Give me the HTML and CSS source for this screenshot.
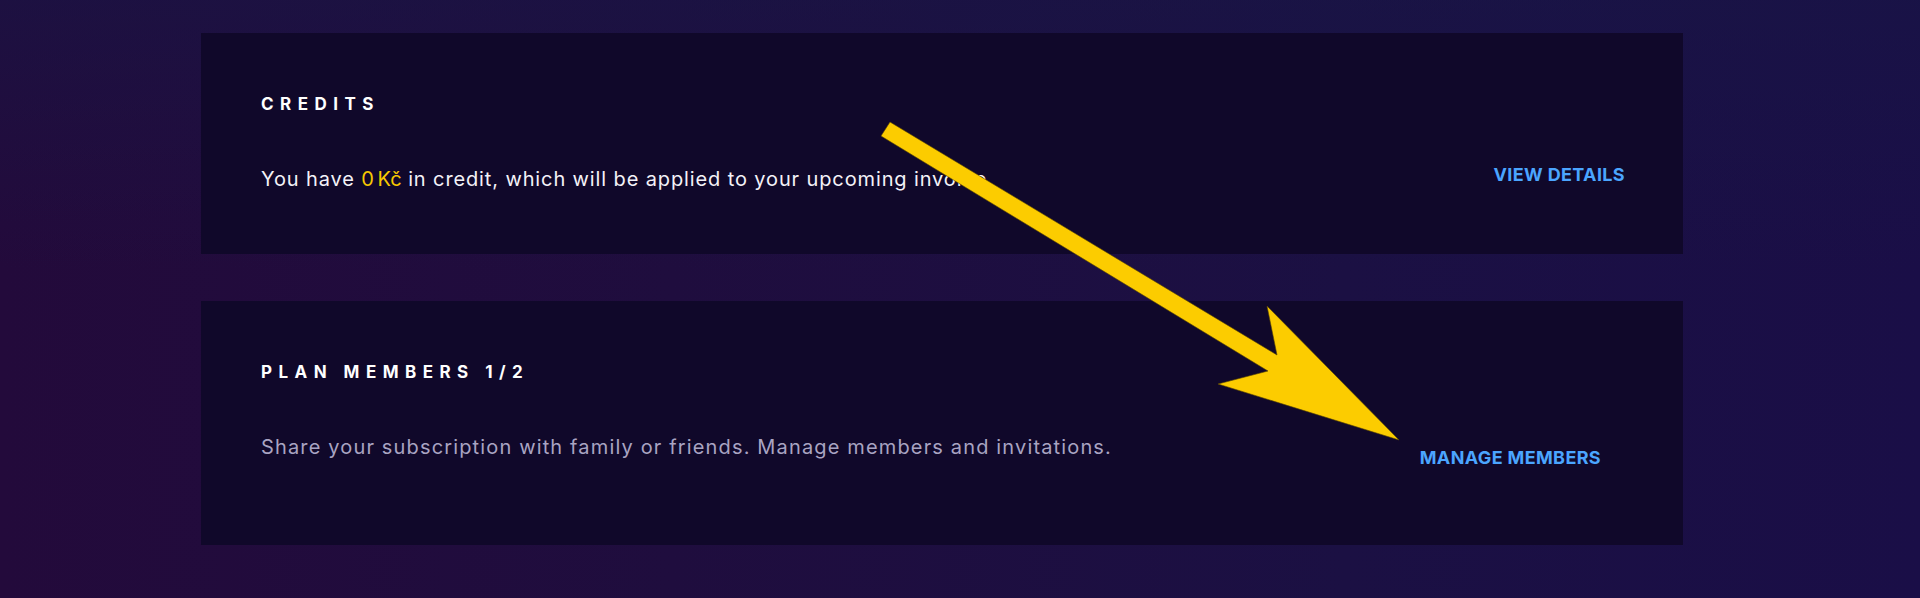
FILE: index.html
```html
<!DOCTYPE html>
<html lang="en">
<head>
<meta charset="utf-8">
<title>Subscription</title>
<link rel="stylesheet" href="styles.css">
</head>
<body>
<main class="page">
  <section class="card card-credits">
    <h2 class="card-title">Credits</h2>
    <div class="card-row">
      <p class="card-text">You have <span class="amount">0&#8239;Kč</span> in credit, which will be applied to your upcoming invoice.</p>
      <a class="link link-details" href="#">View details</a>
    </div>
  </section>
  <section class="card card-members">
    <h2 class="card-title">Plan members 1/2</h2>
    <div class="card-row">
      <p class="card-text card-text-muted">Share your subscription with family or friends. Manage members and invitations.</p>
      <a class="link link-button" href="#">Manage members</a>
    </div>
  </section>
  <svg class="annotation" viewBox="0 0 1920 598" width="1920" height="598" aria-hidden="true">
    <polygon points="890,122 1277,355 1267,306 1399,440 1218,384 1268,371 881,136" fill="#fccc00" stroke="#5a4600" stroke-width="0.6" stroke-linejoin="miter"/>
  </svg>
</main>
</body>
</html>
```

FILE: styles.css
```css
* {
  box-sizing: border-box;
}

html, body {
  margin: 0;
  height: 598px;
  overflow: hidden;
}

body {
  font-family: Inter, "Noto Sans", "Liberation Sans", sans-serif;
  background:
    linear-gradient(180deg, rgba(24, 22, 70, 0.55) 0%, rgba(24, 22, 70, 0) 45%),
    linear-gradient(90deg, #230a3b 0%, #1f0d3e 35%, #1b1043 70%, #1a0e47 100%);
  color: #f2f0f7;
}

.page {
  position: relative;
  width: 1920px;
  height: 598px;
  padding: 33px 0 0 201px;
  display: flex;
  flex-direction: column;
  gap: 47px;
}

.card {
  width: 1482px;
  background: #10082a;
  padding: 61px 58px 61px 60px;
  display: flex;
  flex-direction: column;
  gap: 51px;
}

.card-members {
  padding-bottom: 62px;
}

.card-title {
  margin: 0;
  font-size: 17px;
  line-height: 20px;
  font-weight: 700;
  letter-spacing: 0.38em;
  text-transform: uppercase;
  color: #ffffff;
}

.card-row {
  display: flex;
  justify-content: space-between;
  align-items: flex-start;
}

.card-text {
  margin: 0;
  font-size: 20px;
  line-height: 28px;
  font-weight: 400;
  letter-spacing: 0.88px;
  color: #f4f2f8;
}

.card-text-muted {
  letter-spacing: 1.15px;
  color: #a9a4c2;
}

.amount {
  letter-spacing: 0;
  color: #f7c800;
}

.link {
  font-size: 18px;
  line-height: 28px;
  font-weight: 700;
  letter-spacing: 0.02em;
  text-transform: uppercase;
  color: #4ba5ff;
  text-decoration: none;
  white-space: nowrap;
}

.link-details {
  margin-top: -4px;
}

.link-button {
  padding: 11px 24px;
}

.annotation {
  position: absolute;
  top: 0;
  left: 0;
  pointer-events: none;
}
```
